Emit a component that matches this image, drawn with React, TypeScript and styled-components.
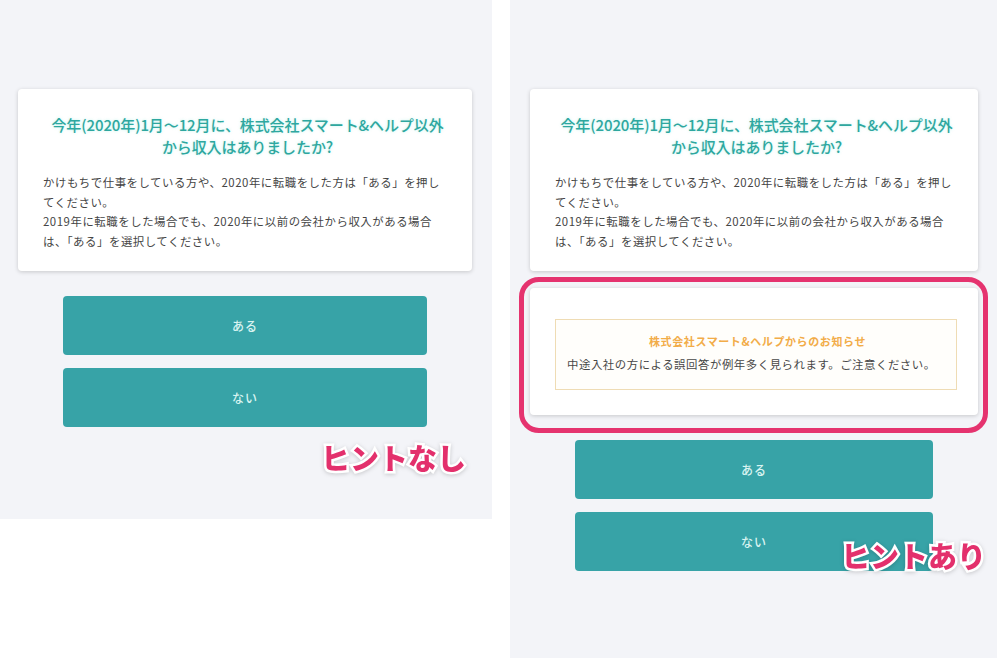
import styled, { createGlobalStyle } from "styled-components";

const GlobalStyle = createGlobalStyle`
  html, body {
    margin: 0;
    padding: 0;
    background: #ffffff;
  }
  body {
    font-family: "Noto Sans CJK JP", "Noto Sans", sans-serif;
  }
`;

const Page = styled.div`
  display: flex;
  width: 997px;
  height: 658px;
  overflow: hidden;
  background: #ffffff;
`;

const Panel = styled.section<{ $left?: boolean }>`
  position: relative;
  display: flex;
  flex-direction: column;
  box-sizing: border-box;
  background: #f3f4f8;
  width: ${(p) => (p.$left ? "492px" : "487px")};
  height: ${(p) => (p.$left ? "519px" : "658px")};
  margin-left: ${(p) => (p.$left ? "0" : "18px")};
  padding: ${(p) => (p.$left ? "89px 20px 0 18px" : "89px 19px 0 20px")};
`;

const Card = styled.div`
  background: #ffffff;
  border-radius: 4px;
  box-shadow: 0 1px 4px rgba(0, 0, 0, 0.18);
  box-sizing: border-box;
`;

const QuestionCard = styled(Card)`
  padding: 25px 20px 20px 25px;
`;

const Title = styled.h2`
  margin: 0 0 15px;
  text-align: center;
  font-size: 15px;
  line-height: 22px;
  font-weight: 500;
  color: #2ea79f;
  text-shadow: 0 0 3px rgba(80, 220, 200, 0.35);
  white-space: nowrap;
  letter-spacing: -0.1px;
`;

const Body = styled.p`
  margin: 0;
  font-size: 11.4px;
  line-height: 19.6px;
  color: #454545;
  white-space: nowrap;
  letter-spacing: 0.55px;
`;

const Buttons = styled.div`
  display: flex;
  flex-direction: column;
  align-items: center;
  gap: 13px;
  margin-top: 25px;
`;

const Choice = styled.button`
  width: 80%;
  height: 59px;
  border: 0;
  border-radius: 4px;
  background: #37a3a7;
  color: #d9f4f1;
  font-family: "Noto Sans CJK JP", sans-serif;
  font-size: 12px;
  font-weight: 500;
  letter-spacing: 1px;
  cursor: pointer;
`;

const HintWrap = styled.div`
  position: relative;
  margin-top: 17px;

  &::before {
    content: "";
    position: absolute;
    top: -11px;
    left: -11px;
    right: -10px;
    bottom: -18px;
    border: 5px solid #e5336f;
    border-radius: 20px;
    pointer-events: none;
  }
`;

const HintCard = styled(Card)`
  padding: 31px 21px 25px 25px;
`;

const Notice = styled.div`
  border: 1px solid #efdcb4;
  background: #fffefb;
  padding: 12px 8px 15px 11px;
  text-align: center;
`;

const NoticeTitle = styled.div`
  font-size: 11px;
  line-height: 18px;
  font-weight: 700;
  color: #f2ac48;
  margin-bottom: 4px;
  letter-spacing: 0.6px;
`;

const NoticeText = styled.div`
  font-size: 11.4px;
  line-height: 20px;
  color: #474747;
  text-align: left;
  white-space: nowrap;
  letter-spacing: 0.55px;
`;

const Tag = styled.div`
  font-family: "Noto Sans CJK JP", sans-serif;
  font-size: 29px;
  line-height: 32px;
  font-weight: 900;
  color: #e3306c;
  -webkit-text-stroke: 5px #ffffff;
  paint-order: stroke fill;
  filter: drop-shadow(0 1px 2px rgba(0, 0, 0, 0.18));
  white-space: nowrap;
`;

const TagRow = styled.div`
  display: flex;
  justify-content: flex-end;
  margin-top: 14px;
  margin-right: 6px;
`;

const FloatingTag = styled(Tag)`
  position: absolute;
  right: 11px;
  top: 539px;
`;

function Question() {
  return (
    <QuestionCard>
      <Title>
        今年(2020年)1月〜12月に、株式会社スマート&ヘルプ以外
        <br />
        から収入はありましたか?
      </Title>
      <Body>
        かけもちで仕事をしている方や、2020年に転職をした方は「ある」を押し
        <br />
        てください。
        <br />
        2019年に転職をした場合でも、2020年に以前の会社から収入がある場合
        <br />
        は、「ある」を選択してください。
      </Body>
    </QuestionCard>
  );
}

function Choices() {
  return (
    <Buttons>
      <Choice>ある</Choice>
      <Choice>ない</Choice>
    </Buttons>
  );
}

export default function App() {
  return (
    <>
      <GlobalStyle />
      <Page>
        <Panel $left>
          <Question />
          <Choices />
          <TagRow>
            <Tag>ヒントなし</Tag>
          </TagRow>
        </Panel>
        <Panel>
          <Question />
          <HintWrap>
            <HintCard>
              <Notice>
                <NoticeTitle>株式会社スマート&ヘルプからのお知らせ</NoticeTitle>
                <NoticeText>
                  中途入社の方による誤回答が例年多く見られます。ご注意ください。
                </NoticeText>
              </Notice>
            </HintCard>
          </HintWrap>
          <Choices />
          <FloatingTag>ヒントあり</FloatingTag>
        </Panel>
      </Page>
    </>
  );
}
